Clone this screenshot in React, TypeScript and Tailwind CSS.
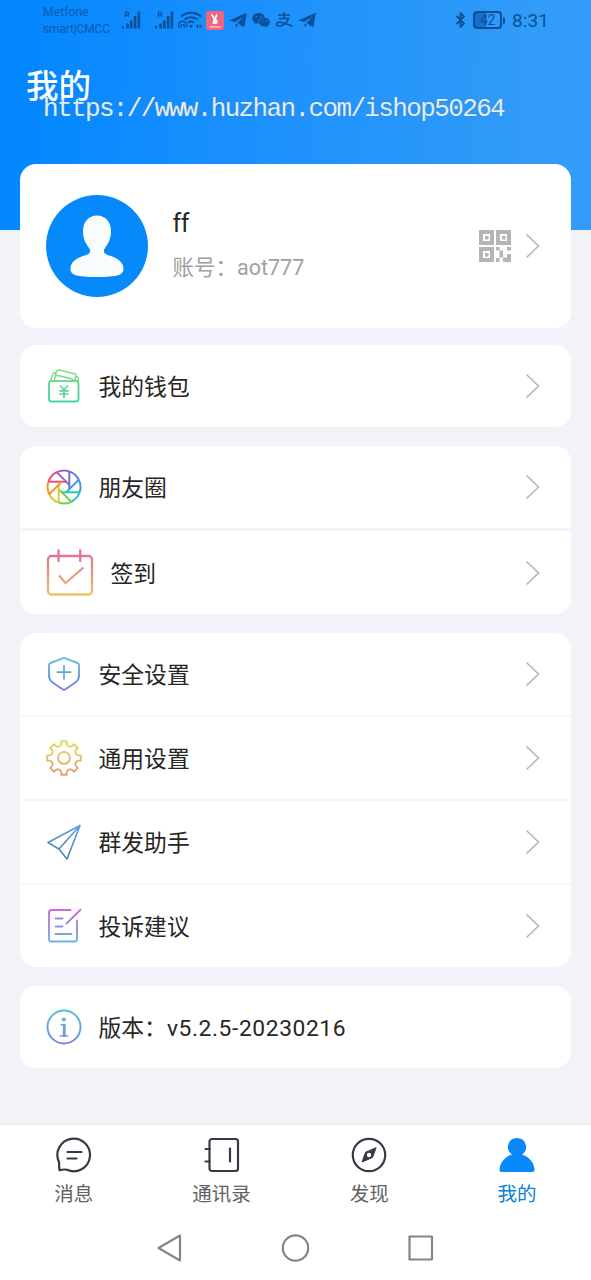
import type { ReactNode } from "react";
import { AiFillWechat } from "react-icons/ai";
import { LuBluetooth } from "react-icons/lu";

function Signal() {
  return (
    <svg width="20" height="20" viewBox="0 0 20 20" fill="currentColor">
      <path d="M0 16h2v2.500h-2zM4.300 13.500h2.600v5h-2.600zM8 10.500h2.600v8h-2.600zM11.800 6h2.600v12.500h-2.600zM15.600 1.500h2.600v17h-2.600z" />
      <path d="M3.400 7V2h2a1.300 1.300 0 0 1 0 2.800h-2m2 0L6.900 7" fill="none" stroke="currentColor" strokeWidth="1.200" />
    </svg>
  );
}

function Wifi() {
  return (
    <svg width="25" height="20" viewBox="0 0 25 20" fill="none" stroke="currentColor" strokeWidth="2">
      <path d="M3 6.500a15 15 0 0 1 20 0M6.500 9.600a10 10 0 0 1 13 0M10 12.600a5 5 0 0 1 6 0" />
      <path d="M11.500 15.500l1.500 2 1.500-2z" fill="currentColor" strokeWidth="1" />
      <path d="M1.200 17.500a4 4 0 1 1 6.800 0M3.300 17.500a1.800 1.800 0 1 1 2.600 0" strokeWidth="1.300" />
      <path d="M20 14l-2.300 2.300 2.300 2.300zM21.500 14l2.300 2.300-2.300 2.300z" fill="currentColor" stroke="none" />
    </svg>
  );
}

function Telegram() {
  return (
    <svg width="18" height="18" viewBox="0 0 18 18" fill="currentColor">
      <path d="M.3 9.500 16.500 2.200Q17.800 1.800 17.600 3.200L15.500 15.300Q15.200 16.600 14 15.800L8.500 12 14.500 5.500 6.200 11zM6.500 12.300 9 14 6.700 16.200z" />
    </svg>
  );
}

function StatusBar() {
  return (
    <div className="flex h-10 items-center pl-[43px] text-[#0b4f96]">
      <div className="w-[79px] pt-[2px] text-[12px] leading-[17px] tracking-[0.150px] text-[#0b5ab0]">
        <div>Metfone</div>
        <div className="whitespace-nowrap tracking-[-0.150px]">smart|CMCC</div>
      </div>
      <Signal />
      <div className="ml-[13px]"><Signal /></div>
      <div className="ml-[3px]"><Wifi /></div>
      <div className="ml-[3px] grid h-[19px] w-[18px] place-items-center rounded-[3px] bg-[#f4627f]">
        <svg width="18" height="19" viewBox="0 0 18 19" fill="#fff">
          <path d="M5 2.500c2 .5 3 2.500 3.500 4.500C9 5.500 9.800 3.500 11 2.500c.8 2-.3 4-1 5.500 1.800.8 2.300 2.500 1.500 4-.6.900-2 1.200-3.300.7L6.500 13c.3-1 .1-1.800.2-2.800.1-1.200.6-1.800 1-2.300C6.500 6.500 5 4.500 5 2.500z" />
          <path d="M3.500 15.300h11v1.200h-11z" opacity=".75" />
        </svg>
      </div>
      <div className="ml-[5px]"><Telegram /></div>
      <AiFillWechat className="ml-[4px] size-[20px]" />
      <svg className="ml-[4px]" width="19" height="18" viewBox="0 0 19 18" fill="none" stroke="currentColor" strokeWidth="1.600">
        <path d="M3 4h12M9 1v6M4 7.500h9.500c-1 3-3 5-5.500 6.500-3 1.500-6.500 1.500-6.500-.8 0-2.500 4-2.500 7-1.200l9 3" />
      </svg>
      <div className="ml-[4px]"><Telegram /></div>
      <LuBluetooth className="ml-[136px] h-[20px] w-[17px]" strokeWidth={2.6} />
      <div className="ml-[4px] flex h-[18px] w-[29px] items-center justify-center rounded-[4px] border-2 border-current bg-[linear-gradient(90deg,#1670c7_45%,transparent_45%)] text-[14px] leading-none tracking-[-0.5px]">
        42
      </div>
      <div className="ml-[1px] h-[7px] w-[2px] rounded-r bg-current" />
      <div className="ml-[7px] pt-[1px] text-[19px] leading-none tracking-[0.1px]">8:31</div>
    </div>
  );
}

function Chevron() {
  return (
    <svg width="16" height="26" viewBox="0 0 16 26" fill="none" stroke="#b9b9b9" strokeWidth="1.700" className="shrink-0">
      <path d="M1.500 1.500 13.500 13 1.500 24.500" />
    </svg>
  );
}

function LineIcon({ id, from, to, children }: { id: string; from: string; to: string; children: ReactNode }) {
  return (
    <svg width="36" height="36" viewBox="0 0 36 36" fill="none" stroke={`url(#${id})`} strokeWidth="1.900" strokeLinecap="round" strokeLinejoin="round">
      <defs>
        <linearGradient id={id} x1="0" y1="0" x2="0" y2="36" gradientUnits="userSpaceOnUse">
          <stop offset="0.050" stopColor={from} />
          <stop offset="0.950" stopColor={to} />
        </linearGradient>
      </defs>
      {children}
    </svg>
  );
}

function WalletIcon() {
  return (
    <LineIcon id="wallet" from="#86dc80" to="#45d2ae">
      <rect x="3" y="13" width="29.500" height="20.500" rx="2.500" />
      <path d="M4.500 12.500 7 6Q7.500 4.600 9 4.500M9 8 10.500 3.500Q11 1.600 13 2L28.500 5.800Q30.300 6.300 29.800 8L28.800 12.500M8 12 9.500 8.500Q10.200 7.200 11.800 7.600L25.500 10.800Q26.800 11.200 26.800 12.500M30.500 8.500Q32.300 9 32.300 11V15" strokeWidth="1.500" />
      <path d="M14.500 18 18 22 21.500 18M14 22.800h8M14 26h8M18 22v7.500" strokeWidth="1.700" />
    </LineIcon>
  );
}

const bladeColors = ["#e2506f", "#a461c9", "#6674dd", "#3f9be6", "#2fc4b8", "#6fd04a", "#d3cf2c", "#f2952f"];

function MomentsIcon() {
  return (
    <svg width="36" height="36" viewBox="-18 -18 36 36" fill="none" strokeWidth="2">
      {bladeColors.map((color, i) => (
        <g key={color} stroke={color} transform={`rotate(${i * 45})`}>
          <path d="M-15.600-5.300H2.300" />
          <path d="M-15.600-5.300A16.500 16.500 0 0 1-7.200-14.800" />
        </g>
      ))}
    </svg>
  );
}

function CheckInIcon() {
  return (
    <svg width="48" height="48" viewBox="0 0 48 48" fill="none" stroke="url(#checkin)" strokeWidth="2.300">
      <defs>
        <linearGradient id="checkin" x1="0" y1="0" x2="0" y2="48" gradientUnits="userSpaceOnUse">
          <stop offset="0.100" stopColor="#df7299" />
          <stop offset="1" stopColor="#e9c965" />
        </linearGradient>
      </defs>
      <rect x="2" y="7" width="44" height="38.500" rx="3.500" />
      <path d="M12.500.500v12.500M34.200.500v12.500M13 26.500l6.500 7.500L37.500 18.500" />
    </svg>
  );
}

function ShieldIcon() {
  return (
    <LineIcon id="shield" from="#57c3df" to="#7581da">
      <path d="M18 1.800 31.500 7Q33 7.800 33 9.500V19.500Q33 23.500 30 26L19.500 33.300Q18 34.300 16.500 33.300L6 26Q3 23.500 3 19.500V9.500Q3 7.800 4.500 7z" />
      <path d="M18 9.500v13.500M11.300 16.200h13.400" strokeWidth="1.700" />
    </LineIcon>
  );
}

const polar = (r: number, deg: number) => {
  const a = (deg * Math.PI) / 180;
  return `${(18 + r * Math.cos(a)).toFixed(2)} ${(18 + r * Math.sin(a)).toFixed(2)}`;
};

const gearPath =
  Array.from({ length: 8 }, (_, i) => {
    const a = i * 45;
    return `${i ? "L" : "M"}${polar(17, a - 9)}L${polar(17, a + 9)}L${polar(14.5, a + 11)}A3.300 3.300 0 0 0 ${polar(14.5, a + 34)}`;
  }).join("") + "Z";

function GearIcon() {
  return (
    <LineIcon id="gear" from="#dfe05c" to="#e8a071">
      <path d={gearPath} />
      <circle cx="18" cy="18" r="6" />
    </LineIcon>
  );
}

function PlaneIcon() {
  return (
    <LineIcon id="plane" from="#5a9fe2" to="#4a87ad">
      <path d="M34 1.500 2 18.500 13 25 21 35zM34 1.500 13 25" strokeWidth="1.600" />
    </LineIcon>
  );
}

function FeedbackIcon() {
  return (
    <LineIcon id="feedback" from="#cf68dc" to="#68b4e2">
      <path d="M24.500 2H5.500Q3 2 3 4.500V31Q3 33.500 5.500 33.500H28.500Q31 33.500 31 31V12.500" />
      <path d="M34.500 1.800 20.500 15.500M9.500 10.500h7M9.500 18.500h7M9.500 26h16" />
    </LineIcon>
  );
}

function InfoIcon() {
  return (
    <LineIcon id="info" from="#57c3d6" to="#7a86da">
      <circle cx="18" cy="18" r="16.500" />
      <circle cx="17.800" cy="10.500" r="1.700" fill="#5cb9db" strokeWidth=".6" />
      <path d="M15 15.800h3.200M14.300 27h7.400" strokeWidth="1.500" />
      <path d="M18.300 16.200v10.300" strokeWidth="2.800" />
    </LineIcon>
  );
}

function Row({ icon, label, wide }: { icon: ReactNode; label: string; wide?: boolean }) {
  return (
    <div className="box-content h-[82px]">
      <div className={`flex h-full items-center pl-[26px] pr-[30px] ${wide ? "pt-[2px]" : ""}`}>
        {icon}
        <span className="ml-[16.500px] flex-1 pt-[4px] text-[22.800px] leading-8 text-[#262626]">{label}</span>
        <Chevron />
      </div>
    </div>
  );
}

function QrIcon() {
  return (
    <svg width="32" height="32" viewBox="0 0 32 32" fill="#b5b5b5">
      <path fillRule="evenodd" d="M0 0h15v15H0zM4 4v7h7V4zM17 0h15v15H17zM21 4v7h7V4zM0 17h15v15H0zM4 21v7h7v-7z" />
      <path d="M6 6h3.500v3.500H6zM23 6h3.500v3.500H23zM6 23h3.500v3.500H6zM17 17h3.500v3.500H17zM20.500 20.500h3.500v7h-3.500zM28 17h4v3.500h-4zM17 28h3.500v4H17zM24 27.500h4v-3.500h4v8h-8z" />
    </svg>
  );
}

function ProfileCard() {
  return (
    <section className="flex h-[164px] items-center rounded-2xl bg-white pl-[26px] pr-[30px]">
      <div className="size-[102px] rounded-full bg-[#0689fb]">
        <svg width="102" height="102" viewBox="0 0 102 102" fill="#f8fcfd">
          <path d="M51 20.500c8.500 0 14 6.500 14 15.500 0 8-2.500 12-6 17-2 3-1.500 5.500 2.500 7C71 62.500 77.500 66.500 77.500 74c0 6-6 8-26.500 8S24.500 80 24.500 74c0-7.500 6.500-11.500 16-14 4-1.500 4.500-4 2.500-7-3.500-5-6-9-6-17C37 27 42.500 20.500 51 20.500z" />
        </svg>
      </div>
      <div className="ml-[24.500px] flex-1">
        <div className="text-[25px] leading-8 tracking-[-0.5px] text-[#262626]">ff</div>
        <div className="mt-[12px] text-[21.500px] leading-8 text-[#a0a0a0]">账号：aot777</div>
      </div>
      <QrIcon />
      <div className="ml-[14px]"><Chevron /></div>
    </section>
  );
}

const tabs = [
  {
    label: "消息",
    icon: (
      <>
        <path d="M3 25A16.300 16.300 0 1 1 11 32.800Q8 32 3.500 33.300 3 30 3 25z" />
        <path d="M11.500 15h14M11.500 21.500h9" />
      </>
    ),
  },
  {
    label: "通讯录",
    icon: (
      <>
        <rect x="5.500" y="2" width="28.500" height="32" rx="2.500" />
        <path d="M1.500 12h4M1.500 24.500h4M26 11.500V24.500" />
      </>
    ),
  },
  {
    label: "发现",
    icon: (
      <>
        <circle cx="18" cy="18" r="16.200" />
        <path d="M25 11 21.500 20.500 11 25 14.500 15.500z" fill="currentColor" strokeWidth="1" />
        <circle cx="18" cy="18" r="2.200" fill="#fff" stroke="none" />
      </>
    ),
  },
  {
    label: "我的",
    active: true,
    icon: (
      <path d="M18 1a9 9 0 0 1 5 16.500C30 19.500 35.500 26 35.500 33q0 2-2 2H2.500q-2 0-2-2C.5 26 6 19.500 13 17.500A9 9 0 0 1 18 1z" fill="currentColor" stroke="none" />
    ),
  },
];

function TabBar() {
  return (
    <nav className="grid h-[92px] grid-cols-4 border-t-2 border-[#ebebf1] pt-[12px]">
      {tabs.map((tab) => (
        <div key={tab.label} className={`flex flex-col items-center ${tab.active ? "text-[#0789fb]" : "text-[#343b46]"}`}>
          <svg width="36" height="36" viewBox="0 0 36 36" fill="none" stroke="currentColor" strokeWidth="2.200" strokeLinecap="round" strokeLinejoin="round">
            {tab.icon}
          </svg>
          <span className={`mt-[8px] text-[19.500px] leading-7 ${tab.active ? "text-[#0c80d6]" : "text-[#626262]"}`}>{tab.label}</span>
        </div>
      ))}
    </nav>
  );
}

function SystemNav() {
  return (
    <div className="flex h-[65px] items-center justify-center pt-[1px]">
      <svg width="277" height="28" viewBox="0 0 277 28" fill="none" stroke="#858585" strokeWidth="2.200" strokeLinejoin="round">
        <path d="M1.500 14 23 1.500v25z" />
        <circle cx="138.500" cy="14" r="12.700" />
        <rect x="252.500" y="2.500" width="22.500" height="23" />
      </svg>
    </div>
  );
}

export default function App() {
  return (
    <div className="flex h-[1280px] w-[591px] flex-col overflow-hidden bg-[#f2f3f8] bg-[linear-gradient(92deg,#0588ff_7%,#1d91fc_45%,#329cf8_92%)] bg-[length:100%_230px] bg-no-repeat font-[Roboto,'Noto_Sans_CJK_SC',sans-serif]">
      <StatusBar />
      <header className="relative h-[124px] pl-[26px] pt-[25px]">
        <h1 className="text-[32.500px] font-medium leading-[44px] text-white">我的</h1>
        <div className="absolute left-[43px] top-[52px] whitespace-nowrap font-['Liberation_Mono',monospace] text-[26px] leading-[34px] tracking-[-1.630px] text-[#e0eefb] [text-shadow:0_0_1px_#4b7397]">
          https://www.huzhan.com/ishop50264
        </div>
      </header>
      <main className="flex flex-1 flex-col px-5">
        <ProfileCard />
        <section className="mt-[17px] rounded-2xl bg-white">
          <Row icon={<WalletIcon />} label="我的钱包" />
        </section>
        <section className="mt-[19px] divide-y-[3px] divide-[#f3f3f7] rounded-2xl bg-white pb-[1px]">
          <Row icon={<MomentsIcon />} label="朋友圈" />
          <Row icon={<CheckInIcon />} label="签到" wide />
        </section>
        <section className="mt-[19px] divide-y-2 divide-[#f6f6f8] rounded-2xl bg-white">
          <Row icon={<ShieldIcon />} label="安全设置" />
          <Row icon={<GearIcon />} label="通用设置" />
          <Row icon={<PlaneIcon />} label="群发助手" />
          <Row icon={<FeedbackIcon />} label="投诉建议" />
        </section>
        <section className="mt-[19px] flex h-[82px] items-center rounded-2xl bg-white pl-[26px]">
          <InfoIcon />
          <span className="ml-[16.500px] pt-[4px] text-[22.800px] leading-8 text-[#262626]">
            版本：<span className="tracking-[0.600px]">v5.2.5-20230216</span>
          </span>
        </section>
      </main>
      <div className="bg-white">
        <TabBar />
        <SystemNav />
      </div>
    </div>
  );
}
